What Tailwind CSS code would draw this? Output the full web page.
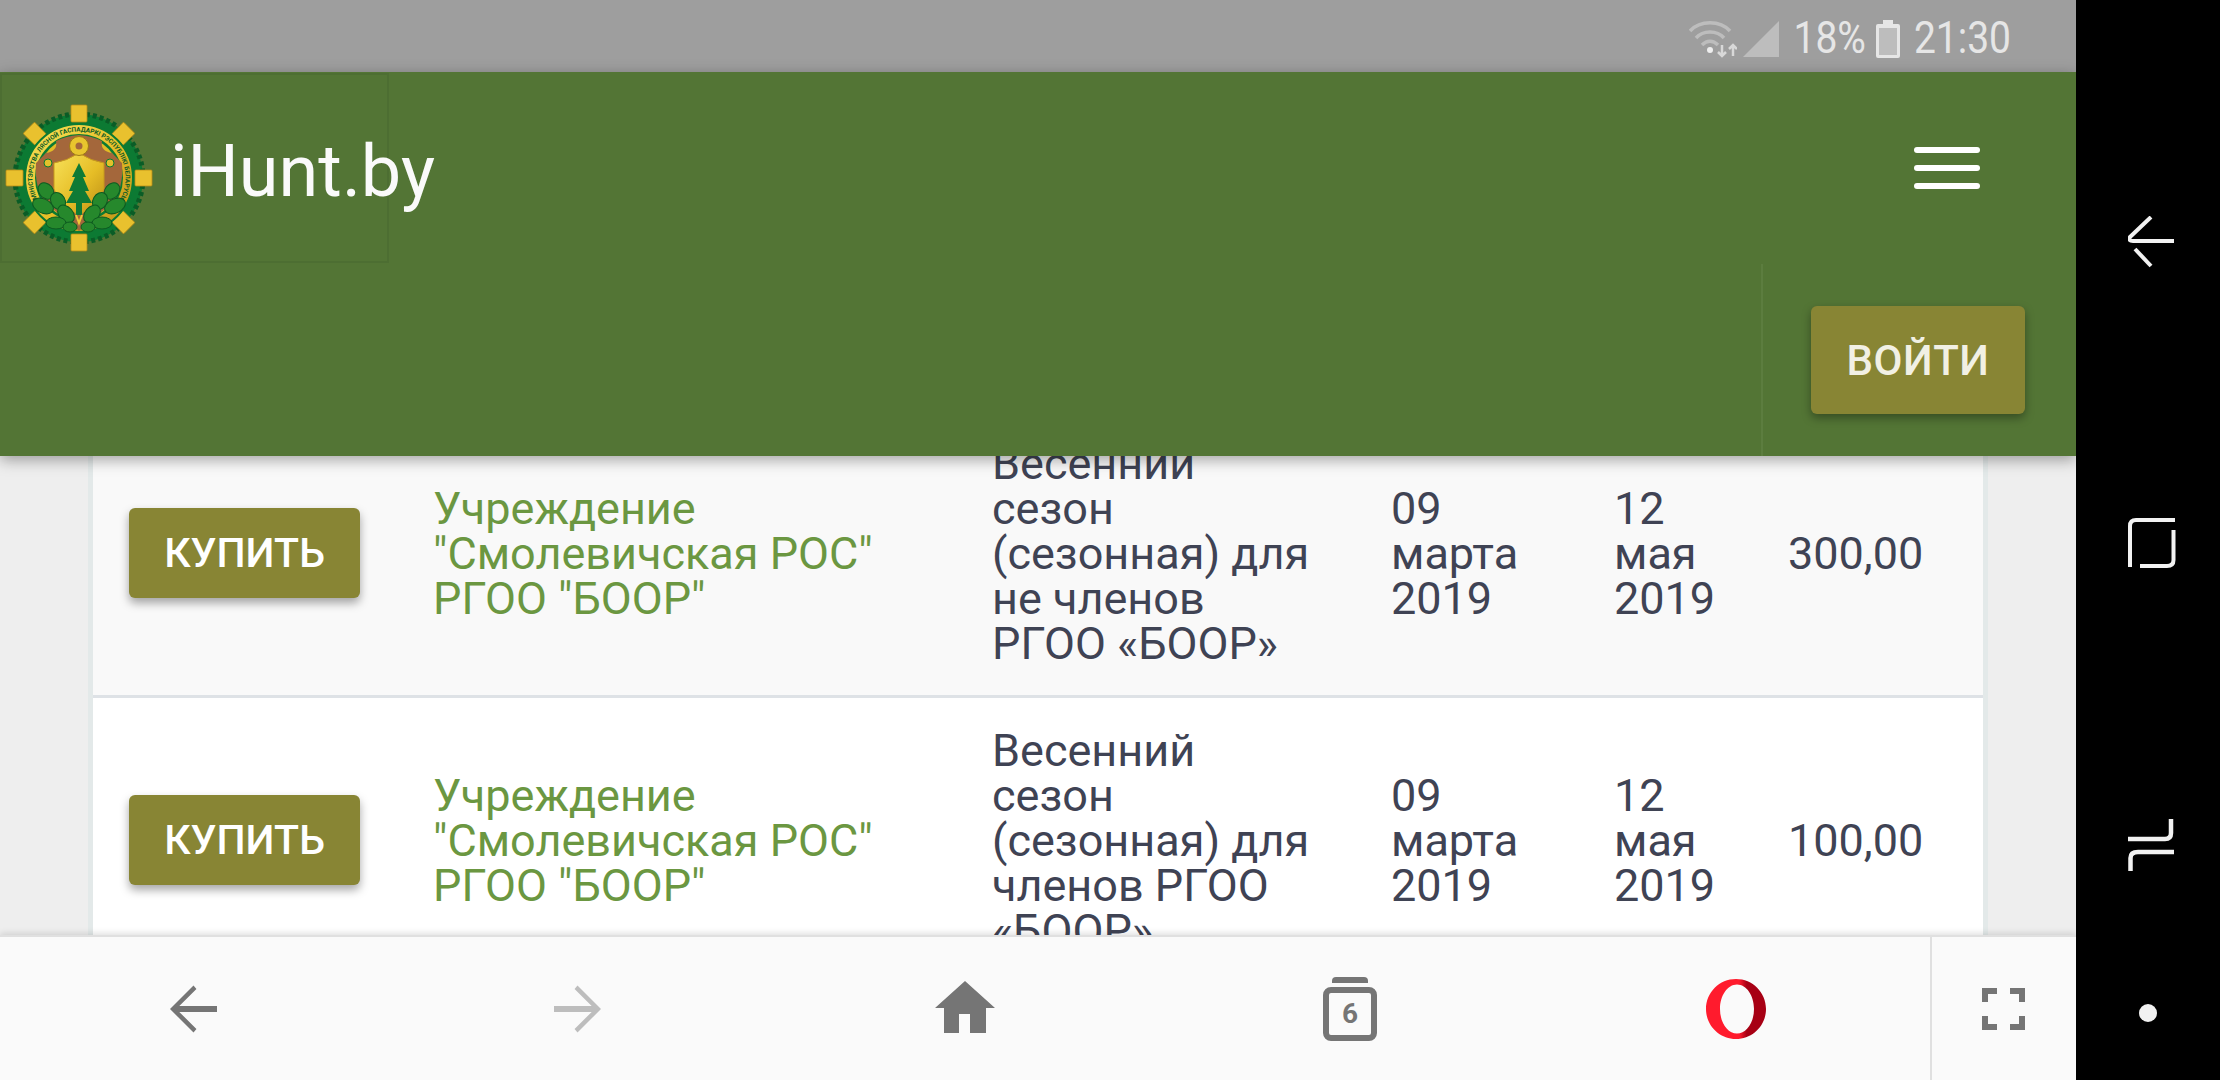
<!DOCTYPE html>
<html lang="ru">
<head>
<meta charset="utf-8">
<title>iHunt.by</title>
<script src="https://cdn.jsdelivr.net/npm/@tailwindcss/browser@4"></script>
</head>
<body class="bg-black">
<div class="flex h-[1080px] w-[2220px] overflow-hidden font-['Roboto',sans-serif]">
  <div class="relative flex w-[2076px] flex-col">
    <!-- status bar -->
    <div class="flex h-[72px] shrink-0 items-center justify-end bg-[#9e9e9e] pt-[5px] pr-[65px] text-[#e6e6e6]">
      <svg class="mr-[6px] h-[40px] w-[48px]" viewBox="0 0 48 40" fill="none" stroke="#bdbdbd" stroke-width="3.500">
        <path d="M1 12 C11 1 31 1 41 12"/><path d="M7 19 C14 11 28 11 35 19"/><path d="M13 26 C18 21 24 21 29 26"/>
        <circle cx="21" cy="31" r="3" fill="#efefef" stroke="none"/>
        <path d="M33 26v11M29 33l4 4 4-4" stroke="#d8d8d8" stroke-width="2.500"/><path d="M44 37V26M40 30l4-4 4 4" stroke="#d8d8d8" stroke-width="2.500"/>
      </svg>
      <svg class="mr-[14px] h-[36px] w-[36px]" viewBox="0 0 36 36"><path d="M36 0V36H0Z" fill="#bdbdbd"/></svg>
      <span class="mr-[10px] inline-block scale-y-[1.15] text-[39px] leading-none">18%</span>
      <svg class="mr-[14px] h-[38px] w-[24px]" viewBox="0 0 24 38"><path d="M7 0h10v4h5a2 2 0 0 1 2 2v30a2 2 0 0 1-2 2H2a2 2 0 0 1-2-2V6a2 2 0 0 1 2-2h5Z" fill="#e6e6e6"/><rect x="3" y="8" width="18" height="27" fill="#bdbdbd"/></svg>
      <span class="inline-block scale-y-[1.15] text-[39px] leading-none">21:30</span>
    </div>

    <!-- header -->
    <div class="relative z-10 h-[384px] shrink-0 bg-[#537535] shadow-[0_4px_14px_rgba(0,0,0,0.35)]">
      <div class="flex h-[192px] items-center justify-between">
        <div class="mb-[1px] flex h-[190px] w-[389px] shrink-0 items-center border-2 border-[#4d6e32] pl-[2px]">
          <svg class="mt-[20px] h-[150px] w-[150px] shrink-0" viewBox="0 0 150 150">
            <defs>
              <path id="ringtext" d="M39.400 104.900A46.500 46.500 0 1 1 110.600 104.900"/>
              <linearGradient id="gold" x1="0" x2="1" y1="0" y2="1"><stop offset="0" stop-color="#f7e25a"/><stop offset="0.55" stop-color="#e6bd26"/><stop offset="1" stop-color="#b98d16"/></linearGradient>
            </defs>
            <circle cx="75" cy="75" r="64" fill="#0c7a33" stroke="#0a5c26" stroke-width="5" stroke-dasharray="4 3"/>
            <g fill="#e9c12e" stroke="#b98d16" stroke-width="0.800">
              <rect x="67" y="2" width="16" height="17" rx="1"/>
              <rect x="67" y="131" width="16" height="17" rx="1"/>
              <rect x="2" y="67" width="17" height="16" rx="1"/>
              <rect x="131" y="67" width="17" height="16" rx="1"/>
              <g transform="rotate(45 75 75)">
                <rect x="67" y="4" width="16" height="17" rx="1"/>
                <rect x="67" y="129" width="16" height="17" rx="1"/>
                <rect x="4" y="67" width="17" height="16" rx="1"/>
                <rect x="129" y="67" width="17" height="16" rx="1"/>
              </g>
            </g>
            <circle cx="75" cy="75" r="54" fill="url(#gold)" stroke="#0c7a33" stroke-width="2"/>
            <text font-family="Roboto" font-size="6.400" font-weight="700" fill="#0a5c26"><textPath href="#ringtext" startOffset="50%" text-anchor="middle">МІНІСТЭРСТВА ЛЯСНОЙ ГАСПАДАРКІ РЭСПУБЛІКІ БЕЛАРУСЬ</textPath></text>
            <circle cx="75" cy="75" r="44" fill="#0c7a33"/>
            <circle cx="75" cy="75" r="41.500" fill="#e3bb25"/>
            <path d="M52 38 Q62 33 75 32 Q88 33 98 38 Q96 48 108 50 L118 60 Q120 85 108 100 L75 128 L42 100 Q30 85 32 60 L42 50 Q54 48 52 38Z" fill="#a4673b"/>
            <circle cx="44" cy="60" r="4" fill="#e3c12b" stroke="#0c7a33"/>
            <circle cx="106" cy="60" r="4" fill="#e3c12b" stroke="#0c7a33"/>
            <path d="M50 60 Q63 58 75 50 Q87 58 100 60 L100 86 Q94 104 75 112 Q56 104 50 86Z" fill="url(#gold)" stroke="#c79a1c"/>
            <circle cx="75" cy="43" r="9.500" fill="#e8c52e" stroke="#9d7a16"/>
            <circle cx="75" cy="43" r="3.500" fill="#a4673b"/>
            <path d="M75 60 L82 74 L79 74 L85 88 L81 88 L88 100 L78 100 L78 112 L72 112 L72 100 L62 100 L69 88 L65 88 L71 74 L68 74Z" fill="#0f7a35"/>
            <g fill="#26882c" stroke="#0c5a20" stroke-width="1">
              <ellipse cx="42" cy="88" rx="9" ry="7" transform="rotate(50 42 88)"/>
              <ellipse cx="108" cy="88" rx="9" ry="7" transform="rotate(-50 108 88)"/>
              <ellipse cx="39" cy="103" rx="11" ry="7" transform="rotate(25 39 103)"/>
              <ellipse cx="111" cy="103" rx="11" ry="7" transform="rotate(-25 111 103)"/>
              <ellipse cx="54" cy="98" rx="9" ry="7" transform="rotate(60 54 98)"/>
              <ellipse cx="96" cy="98" rx="9" ry="7" transform="rotate(-60 96 98)"/>
              <ellipse cx="62" cy="111" rx="10" ry="7" transform="rotate(50 62 111)"/>
              <ellipse cx="88" cy="111" rx="10" ry="7" transform="rotate(-50 88 111)"/>
              <ellipse cx="52" cy="120" rx="10" ry="6"/>
              <ellipse cx="98" cy="120" rx="10" ry="6"/>
              <ellipse cx="66" cy="124" rx="7" ry="5"/>
              <ellipse cx="84" cy="124" rx="7" ry="5"/>
            </g>
            <path d="M72 112 L75 120 L78 112" fill="none" stroke="#efc938" stroke-width="2"/>
          </svg>
          <span class="mt-[8px] ml-[16px] text-[72px] leading-none font-normal whitespace-nowrap text-[#fafafa]">iHunt.by</span>
        </div>
        <button class="mr-[96px] flex w-[66px] flex-col gap-[12px]" aria-label="menu">
          <span class="h-[6px] rounded-full bg-white"></span>
          <span class="h-[6px] rounded-full bg-white"></span>
          <span class="h-[6px] rounded-full bg-white"></span>
        </button>
      </div>
      <div class="flex h-[192px] justify-end">
        <div class="flex w-[315px] items-center border-l-2 border-[#5c7d3f] pl-[48px]">
          <div class="flex h-[108px] w-[214px] items-center justify-center rounded-[6px] bg-[#888534] text-[42px] font-medium tracking-[0.5px] text-[#f1f0e4] shadow-[0_4px_10px_rgba(0,0,0,0.35)]">ВОЙТИ</div>
        </div>
      </div>
    </div>

    <!-- content -->
    <div class="min-h-0 flex-1 overflow-hidden bg-[#eeeeee] pl-[88px]">
      <div class="-mt-[45px] w-[1900px] border-x-[5px] border-[#e3e9e9] text-[45px] leading-[45px] text-[#3f4354]">
        <div class="flex h-[287px] items-center border-b-[3px] border-[#dee2e6] bg-[#f9f9f9]">
          <div class="ml-[36px] flex h-[90px] w-[231px] shrink-0 items-center justify-center rounded-[6px] bg-[#888534] text-[41px] font-medium text-white shadow-[0_5px_10px_rgba(0,0,0,0.35)]">КУПИТЬ</div>
          <div class="ml-[73px] w-[559px] shrink-0 text-[#6b9741]">Учреждение<br>"Смолевичская РОС"<br>РГОО "БООР"</div>
          <div class="w-[399px] shrink-0">Весенний<br>сезон<br>(сезонная) для<br>не членов<br>РГОО «БООР»</div>
          <div class="w-[223px] shrink-0">09<br>марта<br>2019</div>
          <div class="w-[174px] shrink-0">12<br>мая<br>2019</div>
          <div>300,00</div>
        </div>
        <div class="flex h-[284px] items-center bg-white">
          <div class="ml-[36px] flex h-[90px] w-[231px] shrink-0 items-center justify-center rounded-[6px] bg-[#888534] text-[41px] font-medium text-white shadow-[0_5px_10px_rgba(0,0,0,0.35)]">КУПИТЬ</div>
          <div class="ml-[73px] w-[559px] shrink-0 text-[#6b9741]">Учреждение<br>"Смолевичская РОС"<br>РГОО "БООР"</div>
          <div class="w-[399px] shrink-0">Весенний<br>сезон<br>(сезонная) для<br>членов РГОО<br>«БООР»</div>
          <div class="w-[223px] shrink-0">09<br>марта<br>2019</div>
          <div class="w-[174px] shrink-0">12<br>мая<br>2019</div>
          <div>100,00</div>
        </div>
      </div>
    </div>

    <!-- browser toolbar -->
    <div class="relative z-10 flex h-[145px] shrink-0 items-center border-t-2 border-[#e0e0e0] bg-[#fafafa] shadow-[0_-2px_6px_rgba(0,0,0,0.12)]">
      <div class="flex h-full w-[1930px] items-center">
        <svg class="ml-[170px] h-[48px] w-[47px]" viewBox="0 0 48 48" fill="#757575"><path d="M48 21H9.500L27 3.500 24 0 0 24l24 24 3-3.500L9.500 27H48Z"/></svg>
        <svg class="ml-[337px] h-[48px] w-[47px]" viewBox="0 0 48 48" fill="#bdbdbd"><path d="M0 21h38.500L21 3.500 24 0l24 24-24 24-3-3.500L38.500 27H0Z"/></svg>
        <svg class="mb-[3px] ml-[334px] h-[52px] w-[60px]" viewBox="0 0 60 52" fill="#757575"><path d="M30 0 60 27H51V52H35V33H24V52H9V27H0Z"/></svg>
        <svg class="ml-[328px] h-[64px] w-[54px]" viewBox="0 0 54 64">
          <path d="M13 0h28a4 4 0 0 1 4 4v2H9V4a4 4 0 0 1 4-4Z" fill="#757575"/>
          <rect x="3" y="13" width="48" height="48" rx="5" fill="none" stroke="#757575" stroke-width="6"/>
          <text x="27" y="46" text-anchor="middle" font-family="Roboto" font-weight="700" font-size="28" fill="#757575">6</text>
        </svg>
        <svg class="ml-[329px] h-[60px] w-[60px]" viewBox="0 0 60 60">
          <defs><linearGradient id="op" x1="0" x2="1" y1="0" y2="0"><stop offset="0.55" stop-color="#ff1b2d"/><stop offset="0.68" stop-color="#a70014"/></linearGradient></defs>
          <path fill-rule="evenodd" fill="url(#op)" d="M30 0C46.600 0 60 13.400 60 30S46.600 60 30 60 0 46.600 0 30 13.400 0 30 0ZM31 5.500C21.500 5.500 14 16.500 14 30S21.500 54.500 31 54.500 48 43.500 48 30 40.500 5.500 31 5.500Z"/>
        </svg>
      </div>
      <div class="flex h-full flex-1 items-center border-l-2 border-[#e0e0e0] pl-[50px]">
        <svg class="h-[42px] w-[43px]" viewBox="0 0 43 42" fill="none" stroke="#757575" stroke-width="6"><path d="M3 14V3H15M28 3H40V14M40 28V39H28M15 39H3V28"/></svg>
      </div>
    </div>
  </div>

  <!-- android nav rail -->
  <div class="w-[144px] shrink-0 bg-black">
    <div class="flex h-full flex-col items-start pt-[216px] pl-[52px]">
      <svg class="h-[52px] w-[48px]" viewBox="0 0 48 52" fill="none" stroke="#f2f2f2" stroke-width="4"><path d="M23 1 2 21Q0 25 5 25H46"/><path d="M7 33 23 50"/></svg>
      <svg class="mt-[250px] h-[50px] w-[48px]" viewBox="0 0 48 50" fill="none" stroke="#f2f2f2" stroke-width="4"><path d="M2 49V8Q2 2 8 2H47"/><path d="M45.500 12V42Q45.500 48 39 48H12"/></svg>
      <svg class="mt-[251px] h-[54px] w-[47px]" viewBox="0 0 47 54" fill="none" stroke="#f2f2f2" stroke-width="4.500"><path d="M0 20H37Q43 20 43 14V0"/><path d="M2.500 52V39Q2.500 33 10 33H46"/></svg>
      <span class="mt-[131px] ml-[11px] h-[18px] w-[18px] rounded-full bg-[#f2f2f2]"></span>
    </div>
  </div>
</div>
</body>
</html>
